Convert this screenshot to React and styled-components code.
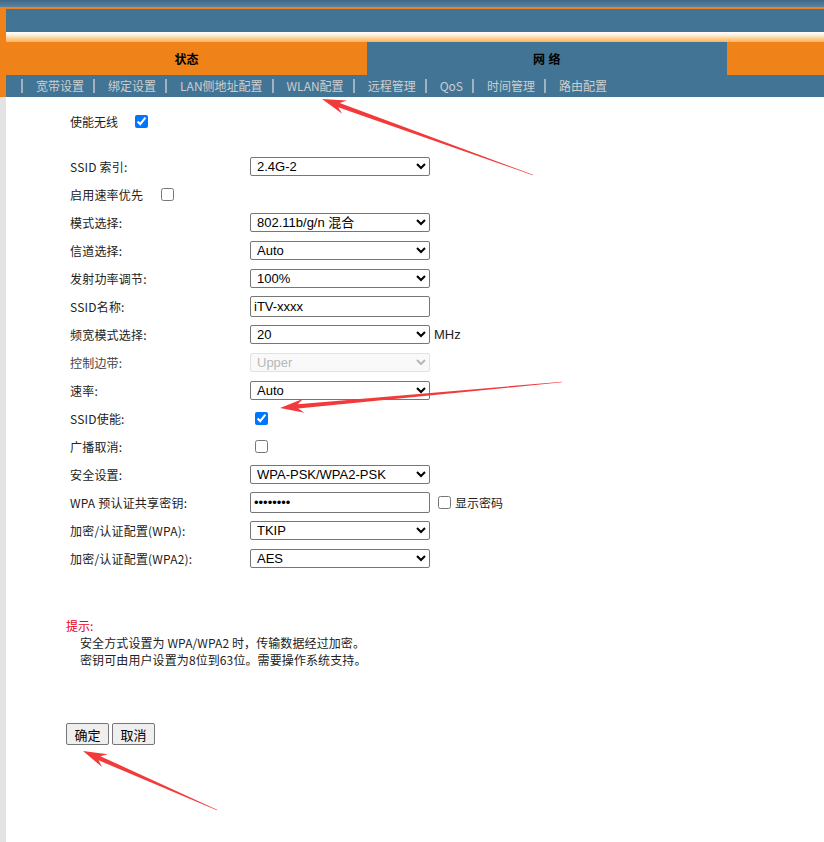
import React from "react";
import styled, { createGlobalStyle } from "styled-components";

const GlobalStyle = createGlobalStyle`
  html, body { margin: 0; padding: 0; background: #fff; }
  body { font-family: "Noto Sans CJK SC", "Liberation Sans", sans-serif; font-size: 12px; color: #222; }
`;

const ORANGE = "#ef8319";
const BLUE = "#427595";
const CJK = `"Noto Sans CJK SC", "Liberation Sans", sans-serif`;
const LATIN = `"Liberation Sans", "Noto Sans CJK SC", sans-serif`;

const Page = styled.div`
  position: relative;
  width: 824px;
  min-height: 842px;
  display: flex;
  flex-direction: column;
  overflow: hidden;
`;

const TopGradient = styled.div`
  height: 7px;
  background: linear-gradient(to bottom, #3f6888, #5a82a2);
`;

const Frame = styled.div`
  flex: 1;
  display: flex;
`;

const Rail = styled.div`
  width: 6px;
  flex: none;
  background: linear-gradient(to bottom, ${ORANGE} 0 90px, #e3e3e3 90px);
`;

const Main = styled.div`
  flex: 1;
  display: flex;
  flex-direction: column;
`;

const OrangeLine = styled.div`
  height: 2px;
  background: ${ORANGE};
`;

const Banner = styled.div`
  height: 23px;
  background: ${BLUE};
`;

const Glow = styled.div`
  height: 10px;
  background: linear-gradient(to bottom, #ffffff 0%, #fff3e6 25%, #fdd29c 60%, #f9b45a 100%);
`;

const Tabs = styled.div`
  display: grid;
  grid-template-columns: 361px 360px 1fr;
  height: 33px;
`;

const Tab = styled.div`
  display: flex;
  align-items: center;
  justify-content: center;
  background: ${(p) => (p.$active ? BLUE : ORANGE)};
  font-family: ${CJK};
  font-weight: bold;
  font-size: 12px;
  color: #000;
  letter-spacing: ${(p) => (p.$spaced ? "0.5px" : "0")};
`;

const Nav = styled.div`
  height: 22px;
  background: ${BLUE};
  display: flex;
  align-items: center;
  padding-left: 15px;
  font-family: ${CJK};
  font-size: 12px;
  color: #cdcdcd;
`;

const NavSep = styled.span`
  display: inline-block;
  width: 2px;
  height: 14px;
  background: #b9c3cc;
  margin: 0 13px 0 0;
  opacity: 0.8;
  &:not(:first-child) { margin-left: 9px; }
`;

const NavLink = styled.span`
  white-space: nowrap;
  line-height: 22px;
`;

const Content = styled.div`
  flex: 1;
  padding: 15px 0 0 64px;
`;

const InlineRow = styled.div`
  display: flex;
  align-items: center;
  height: 18px;
  font-family: ${CJK};
  font-size: 12px;
`;

const Form = styled.div`
  display: grid;
  grid-template-columns: 180px 1fr;
  grid-auto-rows: 28px;
  margin-top: 22px;
`;

const Label = styled.div`
  display: flex;
  align-items: center;
  font-family: ${CJK};
  font-size: 12px;
  letter-spacing: 0.2px;
  color: ${(p) => (p.$muted ? "#444" : "#222")};
  white-space: nowrap;
`;

const Cell = styled.div`
  display: flex;
  align-items: center;
  gap: 4px;
`;

const Select = styled.select`
  width: 180px;
  height: 19px;
  padding: 0 0 0 2px;
  margin: 0;
  font-family: ${LATIN};
  font-size: 13px;
  color: ${(p) => (p.disabled ? "#9a9a9a" : "#000")};
  background: ${(p) => (p.disabled ? "#f7f7f7" : "#fff")};
  border: 1px solid ${(p) => (p.disabled ? "#d6d6d6" : "#767676")};
  border-radius: 2px;
`;

const TextInput = styled.input`
  box-sizing: border-box;
  width: 180px;
  height: 21px;
  padding: 0 3px;
  margin: 0;
  font-family: ${LATIN};
  font-size: 13px;
  color: #000;
  border: 1px solid #767676;
  border-radius: 2px;
`;

const Check = styled.input.attrs({ type: "checkbox" })`
  width: 13px;
  height: 13px;
  margin: 0 0 0 ${(p) => p.$ml ?? 0}px;
  accent-color: #0075ff;
`;

const Unit = styled.span`
  font-family: ${LATIN};
  font-size: 13px;
  color: #222;
`;

const SmallLabel = styled.span`
  font-family: ${CJK};
  font-size: 12px;
  color: #222;
`;

const Hint = styled.div`
  margin: 45px 0 0 -4px;
  font-family: ${CJK};
  font-size: 12px;
  line-height: 17px;
`;

const HintTitle = styled.div`
  color: #e8001c;
`;

const HintLine = styled.div`
  padding-left: 14px;
  color: #222;
  letter-spacing: 0.1px;
`;

const Buttons = styled.div`
  display: flex;
  gap: 3px;
  margin: 55px 0 0 -4px;
`;

const Button = styled.button`
  height: 22px;
  width: 43px;
  padding: 0;
  font-family: ${CJK};
  font-size: 13px;
  color: #000;
  background: #efefef;
  border: 1px solid #767676;
  border-radius: 2px;
`;

const Overlay = styled.svg`
  position: absolute;
  top: 0;
  left: 0;
  pointer-events: none;
`;

function arrowPoints(tx, ty, hx, hy) {
  const dx = hx - tx;
  const dy = hy - ty;
  const len = Math.hypot(dx, dy);
  const ux = dx / len;
  const uy = dy / len;
  const nx = -uy;
  const ny = ux;
  const headLen = 24;
  const headW = 7;
  const shaftEnd = 2.2;
  const tailW = 0.3;
  const bx = hx - ux * headLen;
  const by = hy - uy * headLen;
  const nbx = hx - ux * (headLen - 6);
  const nby = hy - uy * (headLen - 6);
  const pts = [
    [tx + nx * tailW, ty + ny * tailW],
    [nbx + nx * shaftEnd, nby + ny * shaftEnd],
    [bx + nx * headW, by + ny * headW],
    [hx, hy],
    [bx - nx * headW, by - ny * headW],
    [nbx - nx * shaftEnd, nby - ny * shaftEnd],
    [tx - nx * tailW, ty - ny * tailW],
  ];
  return pts.map((p) => p.map((v) => v.toFixed(1)).join(",")).join(" ");
}

function Arrow({ from, to }) {
  return (
    <polygon points={arrowPoints(from[0], from[1], to[0], to[1])} fill="#f23a3a" />
  );
}

const navItems = ["宽带设置", "绑定设置", "LAN侧地址配置", "WLAN配置", "远程管理", "QoS", "时间管理", "路由配置"];

export default function App() {
  return (
    <>
      <GlobalStyle />
      <Page>
        <TopGradient />
        <Frame>
          <Rail />
          <Main>
            <OrangeLine />
            <Banner />
            <Glow />
            <Tabs>
              <Tab>状态</Tab>
              <Tab $active $spaced>网 络</Tab>
              <Tab />
            </Tabs>
            <Nav>
              {navItems.map((item) => (
                <React.Fragment key={item}>
                  <NavSep />
                  <NavLink>{item}</NavLink>
                </React.Fragment>
              ))}
            </Nav>
            <Content>
              <InlineRow>
                使能无线
                <Check defaultChecked $ml={17} />
              </InlineRow>
              <Form>
                <Label>SSID 索引:</Label>
                <Cell>
                  <Select defaultValue="2.4G-2">
                    <option>2.4G-1</option>
                    <option>2.4G-2</option>
                  </Select>
                </Cell>

                <Label>
                  启用速率优先
                  <Check $ml={18} />
                </Label>
                <Cell />

                <Label>模式选择:</Label>
                <Cell>
                  <Select defaultValue="802.11b/g/n 混合">
                    <option>802.11b/g/n 混合</option>
                  </Select>
                </Cell>

                <Label>信道选择:</Label>
                <Cell>
                  <Select defaultValue="Auto">
                    <option>Auto</option>
                  </Select>
                </Cell>

                <Label>发射功率调节:</Label>
                <Cell>
                  <Select defaultValue="100%">
                    <option>100%</option>
                  </Select>
                </Cell>

                <Label>SSID名称:</Label>
                <Cell>
                  <TextInput defaultValue="iTV-xxxx" />
                </Cell>

                <Label>频宽模式选择:</Label>
                <Cell>
                  <Select defaultValue="20">
                    <option>20</option>
                    <option>40</option>
                  </Select>
                  <Unit>MHz</Unit>
                </Cell>

                <Label $muted>控制边带:</Label>
                <Cell>
                  <Select disabled defaultValue="Upper">
                    <option>Upper</option>
                  </Select>
                </Cell>

                <Label>速率:</Label>
                <Cell>
                  <Select defaultValue="Auto">
                    <option>Auto</option>
                  </Select>
                </Cell>

                <Label>SSID使能:</Label>
                <Cell>
                  <Check defaultChecked $ml={5} />
                </Cell>

                <Label>广播取消:</Label>
                <Cell>
                  <Check $ml={5} />
                </Cell>

                <Label>安全设置:</Label>
                <Cell>
                  <Select defaultValue="WPA-PSK/WPA2-PSK">
                    <option>WPA-PSK/WPA2-PSK</option>
                  </Select>
                </Cell>

                <Label>WPA 预认证共享密钥:</Label>
                <Cell>
                  <TextInput type="password" defaultValue="12345678" />
                  <Check $ml={4} />
                  <SmallLabel>显示密码</SmallLabel>
                </Cell>

                <Label>加密/认证配置(WPA):</Label>
                <Cell>
                  <Select defaultValue="TKIP">
                    <option>TKIP</option>
                  </Select>
                </Cell>

                <Label>加密/认证配置(WPA2):</Label>
                <Cell>
                  <Select defaultValue="AES">
                    <option>AES</option>
                  </Select>
                </Cell>
              </Form>

              <Hint>
                <HintTitle>提示:</HintTitle>
                <HintLine>安全方式设置为 WPA/WPA2 时，传输数据经过加密。</HintLine>
                <HintLine>密钥可由用户设置为8位到63位。需要操作系统支持。</HintLine>
              </Hint>

              <Buttons>
                <Button>确定</Button>
                <Button>取消</Button>
              </Buttons>
            </Content>
          </Main>
        </Frame>
        <Overlay width="824" height="842" viewBox="0 0 824 842">
          <Arrow from={[533, 175]} to={[322, 99]} />
          <Arrow from={[562, 382]} to={[280, 408]} />
          <Arrow from={[217, 810]} to={[83, 751]} />
        </Overlay>
      </Page>
    </>
  );
}
